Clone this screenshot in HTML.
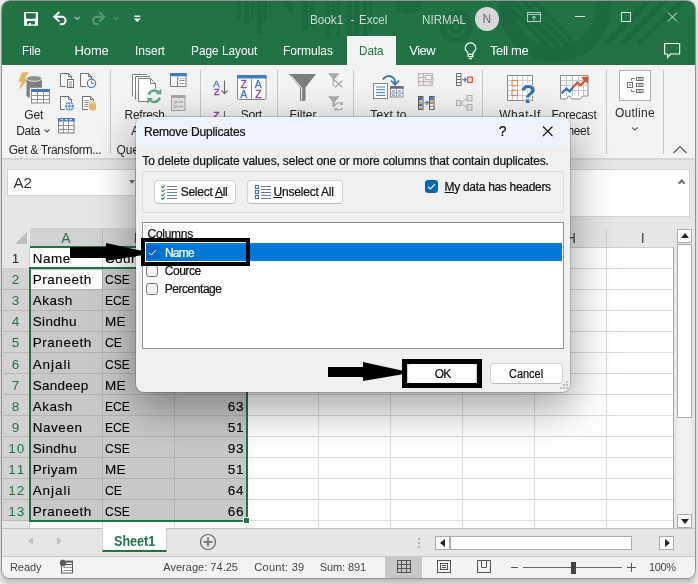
<!DOCTYPE html>
<html lang="en">
<head>
<meta charset="utf-8">
<title>Book1 - Excel</title>
<style>
*{box-sizing:border-box;margin:0;padding:0}
html,body{width:698px;height:584px;overflow:hidden}
body{background:#ededed;font-family:"Liberation Sans",sans-serif;font-size:12px;color:#222;position:relative}
.abs{position:absolute}
.t{position:absolute;white-space:nowrap;line-height:1}
#win{position:absolute;left:2px;top:1px;width:693px;height:577px;border-radius:8px;overflow:hidden;background:#e6e6e6;box-shadow:0 0 0 1px #939393,0 5px 5px 1px rgba(0,0,0,.2)}
/* all children of #win are positioned in page coordinates via this shim */
#pg{position:absolute;left:-2px;top:-1px;width:698px;height:584px;will-change:transform}
#title{left:0;top:0;width:698px;height:65px;background:#217346}
.tab{position:absolute;top:45px;font-size:13px;color:#fff;white-space:nowrap;line-height:1}
#ribbon{left:0;top:65px;width:698px;height:93px;background:#f3f3f3}
.rl{position:absolute;font-size:13px;color:#262626;white-space:nowrap;line-height:1}
.sep{position:absolute;width:1px;background:#c8c8c8;top:70px;height:84px}
#fbar{left:0;top:158px;width:698px;height:70px;background:#e6e6e6}
/* grid */
#grid{left:0;top:228px;width:674px;height:300px;background:#fff;overflow:hidden}
.ch{position:absolute;top:0;height:19px;background:#e6e6e6;font-size:14px;color:#444;text-align:center;line-height:19px}
.rh{position:absolute;left:0;width:30px;height:21px;background:#e6e6e6;font-size:14px;color:#262626;text-align:center;line-height:21px;border-bottom:1px solid #cfcfcf;padding-left:3px}
.rh.s{background:#d2d2d2;color:#217346;border-bottom-color:#b7b7b7}
.c{position:absolute;height:21px;font-size:14px;line-height:21px;color:#111;white-space:nowrap;overflow:hidden}
.n{text-align:right}
/* dialog */
#dlg{left:136px;top:117px;width:434px;height:275px;border-radius:8px;background:#f0f0f0;overflow:hidden;box-shadow:0 0 0 1px rgba(0,0,0,.16),0 14px 42px 3px rgba(0,0,0,.36)}
.btn{position:absolute;background:#fdfdfd;border:1px solid #d0d0d0;border-bottom-color:#bcbcbc;border-radius:4px;font-size:12px;color:#111;text-align:center}
.cb{position:absolute;width:12px;height:12px;border:1px solid #6f6f6f;border-radius:3px;background:#f6f6f6}
</style>
</head>
<body>
<div id="win"><div id="pg">

<!-- TITLE + TABS -->
<div id="title" class="abs">
<svg class="abs" style="left:0;top:0" width="698" height="65" viewBox="0 0 698 65">
<g fill="#1d6a40">
<rect x="237" y="0" width="4" height="19"/><rect x="244" y="0" width="5" height="24"/><rect x="251" y="0" width="3" height="20"/>
<rect x="257" y="0" width="5" height="34"/><rect x="263" y="0" width="4" height="21"/><rect x="269" y="0" width="2" height="17"/>
<polygon points="281,0 292,0 292,14"/>
<rect x="303" y="0" width="5" height="31"/><rect x="310" y="0" width="4" height="27"/>
<rect x="326" y="0" width="4" height="37"/><rect x="332" y="0" width="3" height="30"/><rect x="337" y="0" width="3" height="36"/>
<rect x="347" y="0" width="5" height="44"/><rect x="354" y="0" width="5" height="40"/><rect x="363" y="0" width="4" height="36"/><rect x="369" y="0" width="3" height="30"/>
</g>
<g fill="none" stroke="#1d6a40">
<circle cx="408.5" cy="0" r="14" fill="#1d6a40" stroke="none"/>
<circle cx="456" cy="27" r="5" stroke-width="3.5"/>
<circle cx="456" cy="27" r="13.5" stroke-width="6"/>
<circle cx="555" cy="6" r="48.5" stroke-width="15"/>
</g>
<g stroke="#1d6a40" stroke-width="5">
<line x1="498" y1="-4" x2="548" y2="46"/><line x1="508" y1="-4" x2="558" y2="46"/><line x1="518" y1="-4" x2="568" y2="46"/><line x1="528" y1="-4" x2="572" y2="40"/>
</g>
<g stroke="#1d6a40" stroke-width="5.5">
<line x1="653" y1="-4" x2="605" y2="44"/><line x1="669" y1="-4" x2="621" y2="44"/><line x1="687" y1="-4" x2="639" y2="44"/>
</g>
</svg>

<svg class="abs" style="left:0;top:0" width="160" height="36" viewBox="0 0 160 36" fill="none" stroke="#fff">
<path fill="#fff" stroke="none" fill-rule="evenodd" d="M24 12h14v13.8h-14zM26 13.3v4.4l1 1h7.8l1-1v-4.4zM27 21.1v3.5h2v-1.7h1.9v1.7h4v-3.5z"/>
<path d="M54.5 16.8h7.3a3.75 3.75 0 0 1 0 7.5h-2" stroke-width="2"/><path d="M59.3 12l-5 4.8 5 4.8" stroke-width="2"/>
<path d="M74.8 17l2.4 2.4 2.4-2.4" stroke="#a9c9b6" stroke-width="1.1"/>
<g stroke="#5b9977"><path d="M104 16.8h-7.3a3.75 3.75 0 0 0 0 7.5h2" stroke-width="2"/><path d="M99.2 12l5 4.8-5 4.8" stroke-width="2"/>
<path d="M113.7 17l2.4 2.4 2.4-2.4" stroke-width="1.1"/></g>
<path d="M134.3 16.2h6" stroke-width="1.4"/><path d="M133.8 18.6h7l-3.5 3.5z" fill="#fff" stroke="none"/>
</svg>
<svg class="abs" style="left:515px;top:5px" width="175" height="26" viewBox="0 0 175 26" fill="none" stroke="#dbe8e0" stroke-width="1">
<g stroke="#b4cfbf"><rect x="12.5" y="7.5" width="13" height="9"/><path d="M12.5 9.5h13"/><path d="M19 15.5v-4.5M17 13l2-2 2 2"/></g>
<path d="M60 11.5h10"/>
<rect x="106.5" y="7.5" width="9" height="9"/>
<path d="M153 7.5l9 9M162 7.5l-9 9"/>
</svg>
<svg class="abs" style="left:455px;top:36px" width="243" height="30" viewBox="455 36 243 30" fill="none" stroke="#fff" stroke-width="1.2">
<path d="M468.2 54.3c0-2.3-3-3.1-3-6.1a5.3 5.3 0 0 1 10.6 0c0 3-3 3.8-3 6.1z"/><path d="M468.2 56.6h4.6v-2.3M468.2 54.3v2.3M469 58.6h3"/>
<path d="M664.6 43.5h15v10.5h-9l-3 3.5v-3.5h-3z"/>
</svg>

<div class="t" style="left:310px;top:13px;font-size:13px;color:#c8ddd0;transform:scaleX(0.902);transform-origin:0 0;">Book1</div>
<div class="t" style="left:350.2px;top:13px;font-size:13px;color:#c8ddd0;">-</div>
<div class="t" style="left:359.3px;top:13px;font-size:13px;color:#c8ddd0;transform:scaleX(0.892);transform-origin:0 0;">Excel</div>
<div class="t" style="left:421.8px;top:13px;font-size:13px;color:#c8ddd0;transform:scaleX(0.895);transform-origin:0 0;">NIRMAL</div>
<div class="abs" style="left:475px;top:7px;width:24px;height:24px;border-radius:12px;background:#d9d9d9"></div>
<div class="t" style="left:482.6px;top:13px;font-size:12px;color:#6a6078;">N</div>
<div class="t" style="left:22px;top:44px;font-size:13px;color:#fff;transform:scaleX(0.9);transform-origin:0 0;">File</div>
<div class="t" style="left:74.6px;top:44px;font-size:13px;color:#fff;letter-spacing:-0.14px;">Home</div>
<div class="t" style="left:134.8px;top:44px;font-size:13px;color:#fff;transform:scaleX(0.921);transform-origin:0 0;">Insert</div>
<div class="t" style="left:190.6px;top:44px;font-size:13px;color:#fff;transform:scaleX(0.909);transform-origin:0 0;">Page Layout</div>
<div class="t" style="left:282.8px;top:44px;font-size:13px;color:#fff;transform:scaleX(0.922);transform-origin:0 0;">Formulas</div>
<div class="abs" style="left:347px;top:36px;width:49px;height:30px;background:#f3f3f3"></div>
<div class="t" style="left:358.9px;top:44px;font-size:13px;color:#217346;transform:scaleX(0.894);transform-origin:0 0;">Data</div>
<div class="t" style="left:409.2px;top:44px;font-size:13px;color:#fff;letter-spacing:-0.46px;">View</div>
<div class="t" style="left:490px;top:44px;font-size:13px;color:#fff;letter-spacing:-0.42px;">Tell me</div>
</div>

<!-- RIBBON -->
<div id="ribbon" class="abs"></div>
<div class="sep" style="left:110px"></div>
<div class="sep" style="left:200px"></div>
<div class="sep" style="left:277px"></div>
<div class="sep" style="left:353px"></div>
<div class="sep" style="left:482px"></div>
<div class="sep" style="left:606px"></div>
<div class="sep" style="left:663px"></div>
<div class="t" style="left:24.3px;top:109px;font-size:12px;color:#262626;letter-spacing:-0.15px;">Get</div>
<div class="t" style="left:16.3px;top:125px;font-size:12px;color:#262626;letter-spacing:-0.44px;">Data</div>
<div class="t" style="left:8.8px;top:144px;font-size:12px;color:#262626;letter-spacing:-0.31px;">Get &amp; Transform...</div>
<div class="t" style="left:124.6px;top:109px;font-size:12px;color:#262626;letter-spacing:-0.28px;">Refresh</div>
<div class="t" style="left:131.3px;top:125px;font-size:12px;color:#262626;">All</div>
<div class="t" style="left:116.6px;top:144px;font-size:12px;color:#262626;letter-spacing:-0.1px;">Queries</div>
<div class="t" style="left:213.1px;top:110px;font-size:9.5px;color:#8e44ad;">Z</div>
<div class="t" style="left:240.7px;top:109px;font-size:12px;color:#262626;letter-spacing:-0.19px;">Sort</div>
<div class="t" style="left:289.6px;top:109px;font-size:12px;color:#262626;letter-spacing:0.05px;">Filter</div>
<div class="t" style="left:370.3px;top:109px;font-size:12px;color:#262626;letter-spacing:0.15px;">Text to</div>
<div class="t" style="left:499.3px;top:109px;font-size:12px;color:#262626;letter-spacing:0.41px;">What-If</div>
<div class="t" style="left:551.6px;top:109px;font-size:12px;color:#262626;letter-spacing:-0.22px;">Forecast</div>
<div class="t" style="left:559.8px;top:125px;font-size:12px;color:#262626;letter-spacing:-0.35px;">Sheet</div>
<div class="t" style="left:614.9px;top:107px;font-size:12px;color:#262626;letter-spacing:0.28px;">Outline</div>
<svg class="abs" style="left:0;top:65px" width="698" height="93" viewBox="0 65 698 93">
<!-- Get Data -->
<polygon points="21.7,72.4 28.6,72 25,79.6 28,79.6 18.6,90.6 21.7,81.8 18.2,81.8" fill="#eab765"/>
<path d="M26.5 78.5v17a7.7 2.8 0 0 0 15.4 0v-17z" fill="#7d7d7d"/>
<ellipse cx="34.2" cy="78.5" rx="7.7" ry="2.8" fill="#8f8f8f" stroke="#e9e9e9" stroke-width="1"/>
<rect x="30.5" y="88.5" width="19.5" height="15" fill="#fff" stroke="#f3f3f3" stroke-width="1.4"/>
<rect x="31.5" y="89.5" width="18" height="13.5" fill="#fff" stroke="#858585" stroke-width="1"/>
<rect x="31" y="89" width="19" height="3" fill="#3d7cc9"/>
<path d="M37.5 92v11M43.5 92v11M31.5 95.5h18M31.5 99.5h18" stroke="#8f8f8f" stroke-width="1" fill="none"/>
<!-- doc + list -->
<g fill="none" stroke="#6f6f6f" stroke-width="1">
<path d="M65.5 86.5h-5v-13h8l3 3v2" fill="#fff"/><path d="M68.5 73.5v3h3"/>
<rect x="67.5" y="79.5" width="6" height="8" fill="#fff"/><path d="M69 82h3M69 84h3M69 86h3" stroke-width=".800"/>
<!-- doc + clock -->
<path d="M86 86.5h-5.5v-13h8l3 3v2.5" fill="#fff"/><path d="M88.5 73.5v3h3"/>
<circle cx="91.5" cy="83.3" r="4.2" fill="#fff" stroke="#3d7cc9" stroke-width="1.2"/><path d="M91.5 80.8v2.8h2.3" stroke="#3d7cc9"/>
<!-- doc + globe -->
<path d="M65 109.5h-4.5v-13h8l3 3v2.5" fill="#fff"/><path d="M68.5 96.5v3h3"/>
<circle cx="69.5" cy="106.3" r="4.4" fill="#3d7cc9" stroke="none"/>
<path d="M65.5 104.8h8M65.5 107.8h8" stroke="#fff" stroke-width=".900"/><ellipse cx="69.5" cy="106.3" rx="1.8" ry="4" stroke="#fff" stroke-width=".900"/>
<!-- doc + lines + cylinder -->
<path d="M88 109.5h-5.5v-13h8l3 3v2" fill="#fff"/><path d="M90.5 96.5v3h3"/>
<path d="M84.5 100.5h4M84.5 102.5h4M84.5 104.5h4M84.5 106.5h4" stroke-width=".800"/>
<path d="M89 102.5v6.5a3.5 1.5 0 0 0 7 0v-6.5z" fill="#eab765" stroke="none"/><ellipse cx="92.5" cy="102.5" rx="3.5" ry="1.5" fill="#f1cd90" stroke="none"/>
</g>
<!-- table small -->
<rect x="58.5" y="118.5" width="15.5" height="14.5" fill="#fff" stroke="#7b7b7b"/>
<rect x="58" y="118" width="16.5" height="3.5" fill="#3d7cc9"/>
<path d="M60.5 119.7h2.5M65 119.7h2.5M69.5 119.7h2.5" stroke="#fff" stroke-width="1"/>
<path d="M63.5 121.5v11.5M68.5 121.5v11.5M58.5 125.5h15.5M58.5 129.5h15.5" stroke="#8f8f8f" fill="none"/>
<!-- chevron after Data -->
<path d="M44.5 129.5l2.5 2.5 2.5-2.5" fill="none" stroke="#555" stroke-width="1.1"/>

<!-- Refresh All -->
<g fill="#fff" stroke="#7d7d7d" stroke-width="1">
<path d="M132.5 96.5v-22h14.5"/><path d="M135.5 99.5v-23h14.5" fill="none"/>
<path d="M138.5 78.5h12l5 5v18h-17z"/><path d="M150.5 78.5v5h5" fill="none"/>
</g>
<circle cx="154.3" cy="96.2" r="7.8" fill="#f3f3f3"/>
<g fill="none" stroke="#5fa888" stroke-width="2.5">
<path d="M148.8 94.8a5.7 5.7 0 0 1 9.8-2.4"/><path d="M159.8 97.6a5.7 5.7 0 0 1-9.8 2.4"/>
</g>
<path d="M161.3 88.7v5.6h-5.6z" fill="#5fa888"/><path d="M147.3 103.7v-5.6h5.6z" fill="#5fa888"/>
<!-- queries & connections -->
<rect x="170.5" y="73.5" width="15.5" height="13" fill="#fff" stroke="#7d7d7d"/>
<rect x="170" y="73" width="16.5" height="3.3" fill="#3d7cc9"/>
<path d="M177.5 76.5v10" stroke="#7d7d7d"/><path d="M179.5 80.5h5M179.5 83.5h5" stroke="#8f8f8f"/><path d="M177 78.5h1.5M180 78.5h1.5M183 78.5h1.5" stroke="#8f8f8f" stroke-width=".800"/>
<!-- properties (disabled) -->
<rect x="171.5" y="95.5" width="13.5" height="15" fill="#e9e4e9" stroke="#a9a9a9"/>
<rect x="171" y="95" width="14.5" height="3" fill="#a9a9a9"/>
<circle cx="175.5" cy="102" r="1.2" fill="none" stroke="#9a9a9a" stroke-width=".800"/><circle cx="175.5" cy="106.5" r="1.2" fill="none" stroke="#9a9a9a" stroke-width=".800"/>
<path d="M178.5 102h4.5M178.5 106.5h4.5" stroke="#9a9a9a"/>

<!-- sort A-Z -->
<text x="213.3" y="87.3" font-family="Liberation Sans, sans-serif" font-size="9.5" stroke-width=".35" fill="#3d7cc9" stroke="#3d7cc9">A</text>
<text x="213.7" y="94.8" font-family="Liberation Sans, sans-serif" font-size="9.5" stroke-width=".35" fill="#8e44ad" stroke="#8e44ad">Z</text>
<path d="M224.5 80.5v13M221.5 90.5l3 3.2 3-3.2" fill="none" stroke="#6a6a6a" stroke-width="1.1"/>
<text x="213.7" y="117.8" font-family="Liberation Sans, sans-serif" font-size="9.5" stroke-width=".35" fill="#8e44ad" stroke="#8e44ad">Z</text>
<path d="M224.5 111v13" fill="none" stroke="#6a6a6a" stroke-width="1.1"/>
<!-- Sort big -->
<rect x="237.5" y="75.5" width="28.5" height="24" rx="1" fill="#fff" stroke="#8a8a8a"/>
<rect x="237" y="75" width="29.5" height="3.5" fill="#3d7cc9"/>
<path d="M251.5 78.5v21" stroke="#8a8a8a"/>
<g font-family="Liberation Sans, sans-serif" font-size="10.5" stroke-width=".35">
<text x="240.6" y="88" fill="#8e44ad" stroke="#8e44ad">Z</text><text x="240.3" y="97.5" fill="#3d7cc9" stroke="#3d7cc9">A</text>
<text x="254.8" y="88" fill="#3d7cc9" stroke="#3d7cc9">A</text><text x="255.2" y="97.5" fill="#8e44ad" stroke="#8e44ad">Z</text>
</g>
<!-- Filter funnel -->
<path d="M289 74h27l-10.5 13.5v13.3h-5.5v-13.3z" fill="#7d7d7d"/>
<path d="M291.5 76l10.2 12v12" fill="none" stroke="#fff" stroke-width="1"/>
<!-- clear filter (disabled) -->
<path d="M328 73.3h11.5l-4.5 5.5v3h-2.5v-3z" fill="#a9a9a9"/>
<path d="M333 82v3.5h2" fill="none" stroke="#a9a9a9"/>
<path d="M335 80.5l7.5 7M342.5 80.5l-7.5 7" stroke="#a9a9a9" stroke-width="1.2"/>
<!-- reapply (disabled) -->
<path d="M328 96.3h11.5l-4.5 5.5v5h-2.5v-5z" fill="#a9a9a9"/>
<g fill="none" stroke="#a9a9a9" stroke-width="1.2"><path d="M335.3 105.3a3.6 3.6 0 0 1 6.3-1.2"/><path d="M342.3 107.5a3.6 3.6 0 0 1-6.3 1.2"/></g>
<path d="M342.8 101.5v3.3h-3.3z" fill="#a9a9a9"/><path d="M334.7 111.3v-3.3h3.3z" fill="#a9a9a9"/>

<!-- Text to columns -->
<rect x="373.5" y="83.5" width="14" height="15" fill="#fff" stroke="#8a8a8a"/>
<path d="M376 87h9M376 89.8h9M376 92.6h9M376 95.4h9" stroke="#3d7cc9" stroke-width="1"/>
<rect x="390.5" y="86.5" width="12.5" height="10.5" fill="#fff" stroke="#8a8a8a"/>
<rect x="390" y="86" width="13.5" height="2.8" fill="#6f6f6f"/>
<path d="M396.5 89v8M390.5 93h12.5" stroke="#9a9a9a"/><path d="M392 91h3M398 91h3M392 95h3M398 95h3" stroke="#3d7cc9"/>
<path d="M383 79.5a6.5 6.5 0 0 1 12 1.5v2" fill="none" stroke="#2f74b9" stroke-width="1.8"/>
<path d="M391 80.5l4 4.3 4-4.3" fill="none" stroke="#2f74b9" stroke-width="1.8"/>
<!-- flash fill (disabled) -->
<g fill="none" stroke="#bdb6bd"><rect x="418.5" y="73.5" width="14" height="12" fill="#ece8ec"/><path d="M418.5 77.5h14M418.5 81.5h14M423.5 73.5v12"/><rect x="425.5" y="75.5" width="6" height="4" fill="#f3f3f3"/></g>
<polygon points="431,78 434.5,78 432.5,82 434.5,82 429.5,88 431,83.5 429,83.5" fill="#c9c9c9"/>
<!-- remove duplicates -->
<g stroke="#5f5f5f" stroke-width="1">
<rect x="418.5" y="96.5" width="4.5" height="13" fill="#fff"/><rect x="429.5" y="96.5" width="4.5" height="13" fill="#fff"/></g>
<rect x="419" y="97" width="3.5" height="3" fill="#3d7cc9"/><rect x="419" y="100.3" width="3.5" height="3" fill="#e6b35f"/><rect x="419" y="103.5" width="3.5" height="2.8" fill="#3d7cc9"/><rect x="419" y="106.5" width="3.5" height="2.5" fill="#e6b35f"/>
<rect x="430" y="97" width="3.5" height="3" fill="#3d7cc9"/><rect x="430" y="100.3" width="3.5" height="3" fill="#e6b35f"/>
<path d="M430 103.3h3.5M430 106.3h3.5" stroke="#5f5f5f" stroke-width=".800"/>
<path d="M424 102.8h4M426.3 100.8l2 2-2 2" fill="none" stroke="#2f74b9" stroke-width="1.1"/>
<!-- data validation -->
<rect x="456.5" y="73.5" width="4.5" height="12" fill="#fff" stroke="#6f6f6f"/><path d="M456.5 76.5h4.5M456.5 79.5h4.5M456.5 82.5h4.5" stroke="#6f6f6f"/>
<path d="M462 79.7h4M464.3 77.7l2 2-2 2" fill="none" stroke="#2f74b9" stroke-width="1.1"/>
<rect x="467.7" y="77.2" width="4.6" height="5" fill="#fff" stroke="#d9472b" stroke-width="1.2"/><rect x="469.5" y="79.2" width="1" height="1" fill="#d9472b"/>
<!-- relationships (disabled) -->
<g fill="#ece8ec" stroke="#b5afb5"><path d="M461 102.8l6-4.5M461 102.8l6 5" fill="none"/><rect x="456.5" y="100.5" width="4.5" height="5"/><rect x="467" y="95.5" width="5" height="5.5"/><rect x="467" y="104.5" width="5" height="5.5"/><path d="M458 103h1.5M468.7 98.3h1.5M468.7 107.3h1.5" stroke-width=".800"/></g>

<!-- What-If -->
<rect x="507.5" y="75.5" width="25" height="25" fill="#fff" stroke="#8a8a8a"/>
<path d="M512.5 76v24M517.5 76v24M522.5 76v24M527.5 76v24M508 80.5h24M508 85.5h24M508 90.5h24M508 95.5h24" stroke="#cfcfcf" fill="none"/>
<rect x="512" y="80.5" width="5.5" height="5.3" fill="#fff" stroke="#e8873e" stroke-width="1.1"/><rect x="512" y="90.2" width="5.5" height="5.3" fill="#fff" stroke="#e8873e" stroke-width="1.1"/>
<text x="520.3" y="103.3" font-family="Liberation Sans, sans-serif" font-size="26" font-weight="bold" fill="#f3f3f3" stroke="#f3f3f3" stroke-width="2.5">?</text>
<text x="520.3" y="103.3" font-family="Liberation Sans, sans-serif" font-size="26" font-weight="bold" fill="#2f74b9">?</text>
<!-- Forecast -->
<path d="M560.5 75.5h27.5v20.5h-5.5l-2 3h-9l-1.5-3h-1.5l-2 3h-6z" fill="#fff" stroke="#8a8a8a"/>
<path d="M566.5 76v20M572.5 76v20M578.5 76v20M583.5 76v20M561 80.5h27M561 85.5h27M561 90.5h27" stroke="#c4c4c4" fill="none"/>
<path d="M561.7 93.5l4.8-5 3 3 3.8-4.5" fill="none" stroke="#2f74b9" stroke-width="2.2"/>
<path d="M573 87.2l4.5-4.7 3 3 5-5.5" fill="none" stroke="#d9542e" stroke-width="2.2"/>
<path d="M581 77.2l7.5-.7-.7 7.5z" fill="#d9542e"/>

<!-- Outline -->
<rect x="619.5" y="70.5" width="31" height="30" fill="#fff" stroke="#ababab"/>
<g fill="none" stroke="#6f6f6f" stroke-width="1">
<rect x="627.5" y="82.5" width="5" height="5" fill="#fff"/><path d="M629 85h2M630 84v2" stroke-width=".800"/>
<path d="M631.5 80.5v-2h3M631.5 89.5v2h3"/>
<rect x="636.5" y="77.5" width="6.5" height="3"/><rect x="636.5" y="83.5" width="6.5" height="3"/><rect x="636.5" y="89.5" width="6.5" height="3"/>
</g>
<path d="M638 79h3.5M638 85h3.5M638 91h3.5" stroke="#3d7cc9"/>
<path d="M632 127.5l2.8 2.6 2.8-2.6" fill="none" stroke="#555" stroke-width="1.1"/>
<!-- collapse ribbon -->
<path d="M673.5 153l6.5-6.5 6.5 6.5" fill="none" stroke="#555" stroke-width="1.2"/>
</svg>


<!-- FORMULA BAR -->
<div id="fbar" class="abs">
<div class="abs" style="left:0;top:0;width:698px;height:2px;background:#d6d6d6"></div>
<div class="abs" style="left:7px;top:11px;width:129px;height:27px;background:#fff;border:1px solid #d4d4d4"></div>
<div class="t" style="left:13.6px;top:17px;font-size:15px;color:#333;">A2</div>
<div class="abs" style="left:129px;top:22px;width:0;height:0;border-left:3px solid transparent;border-right:3px solid transparent;border-top:4px solid #777"></div>
<div class="abs" style="left:200px;top:11px;width:490px;height:48px;background:#fff;border:1px solid #d4d4d4"></div>
<svg class="abs" style="left:676px;top:19px" width="12" height="10" viewBox="0 0 12 10" fill="none" stroke="#666" stroke-width="1.9"><path d="M2.7 6.7l3-3.2 3 3.2"/></svg>
</div>

<!-- GRID -->
<div id="grid" class="abs">
<div class="abs" style="left:30px;top:41px;width:217px;height:252px;background:#c8c8c8"></div>
<div class="abs" style="left:31px;top:42px;width:71px;height:20px;background:#fff"></div>
<div class="abs" style="left:0;top:0;width:674px;height:20px;background:#e6e6e6"></div>
<div class="abs" style="left:30px;top:0;width:73px;height:19px;background:#d2d2d2"></div>
<div class="abs" style="left:102px;top:1px;width:1px;height:18px;background:#b9b9b9"></div>
<div class="t" style="left:61.2px;top:3px;font-size:14px;color:#217346;">A</div>
<div class="abs" style="left:103px;top:0;width:72px;height:19px;background:#d2d2d2"></div>
<div class="abs" style="left:174px;top:1px;width:1px;height:18px;background:#b9b9b9"></div>
<div class="t" style="left:133.7px;top:3px;font-size:14px;color:#217346;">B</div>
<div class="abs" style="left:175px;top:0;width:72px;height:19px;background:#d2d2d2"></div>
<div class="abs" style="left:246px;top:1px;width:1px;height:18px;background:#b9b9b9"></div>
<div class="t" style="left:205.7px;top:3px;font-size:14px;color:#217346;">C</div>
<div class="abs" style="left:318px;top:1px;width:1px;height:18px;background:#cdcdcd"></div>
<div class="t" style="left:277.7px;top:3px;font-size:14px;color:#444;">D</div>
<div class="abs" style="left:390px;top:1px;width:1px;height:18px;background:#cdcdcd"></div>
<div class="t" style="left:349.7px;top:3px;font-size:14px;color:#444;">E</div>
<div class="abs" style="left:462px;top:1px;width:1px;height:18px;background:#cdcdcd"></div>
<div class="t" style="left:421.7px;top:3px;font-size:14px;color:#444;">F</div>
<div class="abs" style="left:534px;top:1px;width:1px;height:18px;background:#cdcdcd"></div>
<div class="t" style="left:493.7px;top:3px;font-size:14px;color:#444;">G</div>
<div class="abs" style="left:606px;top:1px;width:1px;height:18px;background:#cdcdcd"></div>
<div class="t" style="left:565.7px;top:3px;font-size:14px;color:#444;">H</div>
<div class="abs" style="left:678px;top:1px;width:1px;height:18px;background:#cdcdcd"></div>
<div class="t" style="left:640.7px;top:3px;font-size:14px;color:#444;">I</div>
<div class="abs" style="left:30px;top:19px;width:644px;height:1px;background:#cdcdcd"></div>
<div class="abs" style="left:30px;top:18px;width:217px;height:2px;background:#217346"></div>
<div class="abs" style="left:15px;top:4px;width:0;height:0;border-left:12px solid transparent;border-bottom:12px solid #bdbdbd"></div>
<div class="abs" style="left:30px;top:40px;width:644px;height:1px;background:#d9d9d9"></div>
<div class="abs" style="left:30px;top:61px;width:644px;height:1px;background:#d9d9d9"></div>
<div class="abs" style="left:30px;top:82px;width:644px;height:1px;background:#d9d9d9"></div>
<div class="abs" style="left:30px;top:103px;width:644px;height:1px;background:#d9d9d9"></div>
<div class="abs" style="left:30px;top:124px;width:644px;height:1px;background:#d9d9d9"></div>
<div class="abs" style="left:30px;top:145px;width:644px;height:1px;background:#d9d9d9"></div>
<div class="abs" style="left:30px;top:166px;width:644px;height:1px;background:#d9d9d9"></div>
<div class="abs" style="left:30px;top:187px;width:644px;height:1px;background:#d9d9d9"></div>
<div class="abs" style="left:30px;top:208px;width:644px;height:1px;background:#d9d9d9"></div>
<div class="abs" style="left:30px;top:229px;width:644px;height:1px;background:#d9d9d9"></div>
<div class="abs" style="left:30px;top:250px;width:644px;height:1px;background:#d9d9d9"></div>
<div class="abs" style="left:30px;top:271px;width:644px;height:1px;background:#d9d9d9"></div>
<div class="abs" style="left:30px;top:292px;width:644px;height:1px;background:#d9d9d9"></div>
<div class="abs" style="left:30px;top:313px;width:644px;height:1px;background:#d9d9d9"></div>
<div class="abs" style="left:102px;top:20px;width:1px;height:280px;background:#d9d9d9"></div>
<div class="abs" style="left:174px;top:20px;width:1px;height:280px;background:#d9d9d9"></div>
<div class="abs" style="left:246px;top:20px;width:1px;height:280px;background:#d9d9d9"></div>
<div class="abs" style="left:318px;top:20px;width:1px;height:280px;background:#d9d9d9"></div>
<div class="abs" style="left:390px;top:20px;width:1px;height:280px;background:#d9d9d9"></div>
<div class="abs" style="left:462px;top:20px;width:1px;height:280px;background:#d9d9d9"></div>
<div class="abs" style="left:534px;top:20px;width:1px;height:280px;background:#d9d9d9"></div>
<div class="abs" style="left:606px;top:20px;width:1px;height:280px;background:#d9d9d9"></div>
<div class="abs" style="left:30px;top:61px;width:217px;height:1px;background:#b2b2b2"></div>
<div class="abs" style="left:30px;top:82px;width:217px;height:1px;background:#b2b2b2"></div>
<div class="abs" style="left:30px;top:103px;width:217px;height:1px;background:#b2b2b2"></div>
<div class="abs" style="left:30px;top:124px;width:217px;height:1px;background:#b2b2b2"></div>
<div class="abs" style="left:30px;top:145px;width:217px;height:1px;background:#b2b2b2"></div>
<div class="abs" style="left:30px;top:166px;width:217px;height:1px;background:#b2b2b2"></div>
<div class="abs" style="left:30px;top:187px;width:217px;height:1px;background:#b2b2b2"></div>
<div class="abs" style="left:30px;top:208px;width:217px;height:1px;background:#b2b2b2"></div>
<div class="abs" style="left:30px;top:229px;width:217px;height:1px;background:#b2b2b2"></div>
<div class="abs" style="left:30px;top:250px;width:217px;height:1px;background:#b2b2b2"></div>
<div class="abs" style="left:30px;top:271px;width:217px;height:1px;background:#b2b2b2"></div>
<div class="abs" style="left:102px;top:41px;width:1px;height:252px;background:#b2b2b2"></div>
<div class="abs" style="left:174px;top:41px;width:1px;height:252px;background:#b2b2b2"></div>
<div class="abs" style="left:0;top:20px;width:30px;height:280px;background:#e6e6e6"></div>
<div class="abs" style="left:0;top:41px;width:30px;height:252px;background:#d2d2d2"></div>
<div class="abs" style="left:3px;top:40px;width:27px;height:1px;background:#cdcdcd"></div>
<div class="t" style="left:11.7px;top:24px;font-size:13.5px;color:#262626;">1</div>
<div class="abs" style="left:3px;top:61px;width:27px;height:1px;background:#b9b9b9"></div>
<div class="t" style="left:11.7px;top:45px;font-size:13.5px;color:#217346;">2</div>
<div class="abs" style="left:3px;top:82px;width:27px;height:1px;background:#b9b9b9"></div>
<div class="t" style="left:11.7px;top:66px;font-size:13.5px;color:#217346;">3</div>
<div class="abs" style="left:3px;top:103px;width:27px;height:1px;background:#b9b9b9"></div>
<div class="t" style="left:11.7px;top:87px;font-size:13.5px;color:#217346;">4</div>
<div class="abs" style="left:3px;top:124px;width:27px;height:1px;background:#b9b9b9"></div>
<div class="t" style="left:11.7px;top:108px;font-size:13.5px;color:#217346;">5</div>
<div class="abs" style="left:3px;top:145px;width:27px;height:1px;background:#b9b9b9"></div>
<div class="t" style="left:11.7px;top:130px;font-size:13.5px;color:#217346;">6</div>
<div class="abs" style="left:3px;top:166px;width:27px;height:1px;background:#b9b9b9"></div>
<div class="t" style="left:11.7px;top:151px;font-size:13.5px;color:#217346;">7</div>
<div class="abs" style="left:3px;top:187px;width:27px;height:1px;background:#b9b9b9"></div>
<div class="t" style="left:11.7px;top:172px;font-size:13.5px;color:#217346;">8</div>
<div class="abs" style="left:3px;top:208px;width:27px;height:1px;background:#b9b9b9"></div>
<div class="t" style="left:11.7px;top:193px;font-size:13.5px;color:#217346;">9</div>
<div class="abs" style="left:3px;top:229px;width:27px;height:1px;background:#b9b9b9"></div>
<div class="t" style="left:8.2px;top:214px;font-size:13.5px;color:#217346;letter-spacing:0.99px;">10</div>
<div class="abs" style="left:3px;top:250px;width:27px;height:1px;background:#b9b9b9"></div>
<div class="t" style="left:8.2px;top:235px;font-size:13.5px;color:#217346;letter-spacing:2px;">11</div>
<div class="abs" style="left:3px;top:271px;width:27px;height:1px;background:#b9b9b9"></div>
<div class="t" style="left:8.2px;top:256px;font-size:13.5px;color:#217346;letter-spacing:0.99px;">12</div>
<div class="abs" style="left:3px;top:292px;width:27px;height:1px;background:#b9b9b9"></div>
<div class="t" style="left:8.2px;top:277px;font-size:13.5px;color:#217346;letter-spacing:0.99px;">13</div>
<div class="abs" style="left:3px;top:313px;width:27px;height:1px;background:#cdcdcd"></div>
<div class="t" style="left:8.2px;top:298px;font-size:13.5px;color:#262626;letter-spacing:0.99px;">14</div>
<div class="abs" style="left:29px;top:20px;width:1px;height:280px;background:#cdcdcd"></div>
<div class="abs" style="left:29px;top:41px;width:2px;height:252px;background:#217346"></div>
<div class="t" style="left:32.7px;top:24px;font-size:13.5px;color:#000;letter-spacing:0.53px;-webkit-text-stroke:.12px #000;">Name</div>
<div class="t" style="left:104.9px;top:24px;font-size:13.5px;color:#000;letter-spacing:0.42px;-webkit-text-stroke:.12px #000;">Cource</div>
<div class="t" style="left:177.2px;top:24px;font-size:13.5px;color:#000;letter-spacing:-0.16px;-webkit-text-stroke:.12px #000;">Percentage</div>
<div class="t" style="left:32.7px;top:45px;font-size:13.5px;color:#000;letter-spacing:0.55px;-webkit-text-stroke:.12px #000;">Praneeth</div>
<div class="t" style="left:105px;top:45px;font-size:13.5px;color:#000;transform:scaleX(0.887);transform-origin:0 0;-webkit-text-stroke:.12px #000;">CSE</div>
<div class="t" style="left:227.8px;top:45px;font-size:13.5px;color:#000;letter-spacing:0.79px;-webkit-text-stroke:.12px #000;">85</div>
<div class="t" style="left:32.7px;top:66px;font-size:13.5px;color:#000;letter-spacing:0.52px;-webkit-text-stroke:.12px #000;">Akash</div>
<div class="t" style="left:105px;top:66px;font-size:13.5px;color:#000;transform:scaleX(0.894);transform-origin:0 0;-webkit-text-stroke:.12px #000;">ECE</div>
<div class="t" style="left:227.8px;top:66px;font-size:13.5px;color:#000;letter-spacing:0.79px;-webkit-text-stroke:.12px #000;">92</div>
<div class="t" style="left:32.7px;top:87px;font-size:13.5px;color:#000;letter-spacing:0.35px;-webkit-text-stroke:.12px #000;">Sindhu</div>
<div class="t" style="left:104.9px;top:87px;font-size:13.5px;color:#000;letter-spacing:0.47px;-webkit-text-stroke:.12px #000;">ME</div>
<div class="t" style="left:227.8px;top:87px;font-size:13.5px;color:#000;letter-spacing:0.79px;-webkit-text-stroke:.12px #000;">78</div>
<div class="t" style="left:32.7px;top:108px;font-size:13.5px;color:#000;letter-spacing:0.55px;-webkit-text-stroke:.12px #000;">Praneeth</div>
<div class="t" style="left:105px;top:108px;font-size:13.5px;color:#000;transform:scaleX(0.907);transform-origin:0 0;-webkit-text-stroke:.12px #000;">CE</div>
<div class="t" style="left:227.8px;top:108px;font-size:13.5px;color:#000;letter-spacing:0.79px;-webkit-text-stroke:.12px #000;">85</div>
<div class="t" style="left:32.7px;top:130px;font-size:13.5px;color:#000;letter-spacing:0.92px;-webkit-text-stroke:.12px #000;">Anjali</div>
<div class="t" style="left:105px;top:130px;font-size:13.5px;color:#000;transform:scaleX(0.887);transform-origin:0 0;-webkit-text-stroke:.12px #000;">CSE</div>
<div class="t" style="left:227.8px;top:130px;font-size:13.5px;color:#000;letter-spacing:0.79px;-webkit-text-stroke:.12px #000;">88</div>
<div class="t" style="left:32.7px;top:151px;font-size:13.5px;color:#000;letter-spacing:0.26px;-webkit-text-stroke:.12px #000;">Sandeep</div>
<div class="t" style="left:104.9px;top:151px;font-size:13.5px;color:#000;letter-spacing:0.47px;-webkit-text-stroke:.12px #000;">ME</div>
<div class="t" style="left:227.8px;top:151px;font-size:13.5px;color:#000;letter-spacing:0.79px;-webkit-text-stroke:.12px #000;">75</div>
<div class="t" style="left:32.7px;top:172px;font-size:13.5px;color:#000;letter-spacing:0.52px;-webkit-text-stroke:.12px #000;">Akash</div>
<div class="t" style="left:105px;top:172px;font-size:13.5px;color:#000;transform:scaleX(0.894);transform-origin:0 0;-webkit-text-stroke:.12px #000;">ECE</div>
<div class="t" style="left:227.8px;top:172px;font-size:13.5px;color:#000;letter-spacing:0.79px;-webkit-text-stroke:.12px #000;">63</div>
<div class="t" style="left:32.7px;top:193px;font-size:13.5px;color:#000;letter-spacing:0.55px;-webkit-text-stroke:.12px #000;">Naveen</div>
<div class="t" style="left:105px;top:193px;font-size:13.5px;color:#000;transform:scaleX(0.894);transform-origin:0 0;-webkit-text-stroke:.12px #000;">ECE</div>
<div class="t" style="left:227.8px;top:193px;font-size:13.5px;color:#000;letter-spacing:0.79px;-webkit-text-stroke:.12px #000;">51</div>
<div class="t" style="left:32.7px;top:214px;font-size:13.5px;color:#000;letter-spacing:0.35px;-webkit-text-stroke:.12px #000;">Sindhu</div>
<div class="t" style="left:105px;top:214px;font-size:13.5px;color:#000;transform:scaleX(0.887);transform-origin:0 0;-webkit-text-stroke:.12px #000;">CSE</div>
<div class="t" style="left:227.8px;top:214px;font-size:13.5px;color:#000;letter-spacing:0.79px;-webkit-text-stroke:.12px #000;">93</div>
<div class="t" style="left:32.7px;top:235px;font-size:13.5px;color:#000;letter-spacing:0.5px;-webkit-text-stroke:.12px #000;">Priyam</div>
<div class="t" style="left:104.9px;top:235px;font-size:13.5px;color:#000;letter-spacing:0.47px;-webkit-text-stroke:.12px #000;">ME</div>
<div class="t" style="left:227.8px;top:235px;font-size:13.5px;color:#000;letter-spacing:0.79px;-webkit-text-stroke:.12px #000;">51</div>
<div class="t" style="left:32.7px;top:256px;font-size:13.5px;color:#000;letter-spacing:0.92px;-webkit-text-stroke:.12px #000;">Anjali</div>
<div class="t" style="left:105px;top:256px;font-size:13.5px;color:#000;transform:scaleX(0.907);transform-origin:0 0;-webkit-text-stroke:.12px #000;">CE</div>
<div class="t" style="left:227.8px;top:256px;font-size:13.5px;color:#000;letter-spacing:0.79px;-webkit-text-stroke:.12px #000;">64</div>
<div class="t" style="left:32.7px;top:277px;font-size:13.5px;color:#000;letter-spacing:0.55px;-webkit-text-stroke:.12px #000;">Praneeth</div>
<div class="t" style="left:105px;top:277px;font-size:13.5px;color:#000;transform:scaleX(0.887);transform-origin:0 0;-webkit-text-stroke:.12px #000;">CSE</div>
<div class="t" style="left:227.8px;top:277px;font-size:13.5px;color:#000;letter-spacing:0.79px;-webkit-text-stroke:.12px #000;">66</div>
<div class="abs" style="left:29px;top:39px;width:219px;height:255px;border:2px solid #217346"></div>
<div class="abs" style="left:243px;top:289px;width:7px;height:7px;background:#217346;border:1px solid #fff"></div>
</div>
<div class="abs" style="left:674px;top:228px;width:24px;height:300px;background:#e6e6e6"></div>
<div class="abs" style="left:673px;top:247px;width:1px;height:281px;background:#ababab"></div>
<div class="abs" style="left:677px;top:244px;width:15px;height:270px;background:#f0f0f0"></div>
<div class="abs" style="left:677px;top:229px;width:15px;height:14px;background:#fff;border:1px solid #ababab"></div>
<div class="abs" style="left:681px;top:233px;width:0;height:0;border-left:4px solid transparent;border-right:4px solid transparent;border-bottom:5px solid #222"></div>
<div class="abs" style="left:677px;top:244px;width:15px;height:174px;background:#fff;border:1px solid #ababab"></div>
<div class="abs" style="left:677px;top:514px;width:15px;height:14px;background:#fff;border:1px solid #ababab"></div>
<div class="abs" style="left:681px;top:519px;width:0;height:0;border-left:4px solid transparent;border-right:4px solid transparent;border-top:5px solid #222"></div>

<!-- SHEET TABS / STATUS -->
<div id="sheetbar" class="abs" style="left:0;top:528px;width:698px;height:28px;background:#e6e6e6">
<div class="abs" style="left:0;top:0;width:698px;height:1px;background:#bdbdbd"></div>
<div class="abs" style="left:102px;top:0;width:65px;height:24px;background:#fff;border-bottom:2px solid #217346;border-left:1px solid #cfcfcf;border-right:1px solid #cfcfcf"></div>
<div class="t" style="left:113.5px;top:6px;font-size:14px;color:#217346;font-weight:bold;transform:scaleX(0.897);transform-origin:0 0;">Sheet1</div>
<div class="abs" style="left:28px;top:9px;width:0;height:0;border-top:4px solid transparent;border-bottom:4px solid transparent;border-right:5px solid #c0c0c0"></div>
<div class="abs" style="left:57px;top:9px;width:0;height:0;border-top:4px solid transparent;border-bottom:4px solid transparent;border-left:5px solid #c0c0c0"></div>
<svg class="abs" style="left:198px;top:4px" width="20" height="20" viewBox="0 0 20 20" fill="none" stroke="#666" stroke-width="1.2"><circle cx="10" cy="10" r="7.5"/><path d="M10 5.5v9M5.5 10h9" stroke-width="1.5"/></svg>
<div class="abs" style="left:418px;top:10px;width:2px;height:2px;background:#b0b0b0"></div>
<div class="abs" style="left:418px;top:14px;width:2px;height:2px;background:#b0b0b0"></div>
<div class="abs" style="left:418px;top:18px;width:2px;height:2px;background:#b0b0b0"></div>
<div class="abs" style="left:435px;top:8px;width:15px;height:14px;background:#fff;border:1px solid #ababab"></div>
<div class="abs" style="left:440px;top:11px;width:0;height:0;border-top:4px solid transparent;border-bottom:4px solid transparent;border-right:5px solid #222"></div>
<div class="abs" style="left:450px;top:8px;width:182px;height:14px;background:#fff;border:1px solid #ababab"></div>
<div class="abs" style="left:659px;top:8px;width:15px;height:14px;background:#fff;border:1px solid #ababab"></div>
<div class="abs" style="left:665px;top:11px;width:0;height:0;border-top:4px solid transparent;border-bottom:4px solid transparent;border-left:5px solid #222"></div>
</div>
<div id="status" class="abs" style="left:0;top:556px;width:698px;height:23px;background:#f3f3f3">
<div class="abs" style="left:0;top:0;width:698px;height:1px;background:#c6c6c6"></div>
<div class="t" style="left:10px;top:6px;font-size:11px;color:#444;letter-spacing:-0.09px;">Ready</div>
<div class="t" style="left:163.3px;top:6px;font-size:11px;color:#444;letter-spacing:0.02px;">Average: 74.25</div>
<div class="t" style="left:254.3px;top:6px;font-size:11px;color:#444;letter-spacing:0.28px;">Count: 39</div>
<div class="t" style="left:319.8px;top:6px;font-size:11px;color:#444;letter-spacing:-0.12px;">Sum: 891</div>
<div class="t" style="left:649.1px;top:6px;font-size:11px;color:#444;letter-spacing:-0.41px;">100%</div>
<div class="abs" style="left:385px;top:1px;width:37px;height:21px;background:#c8c8c8"></div>
<svg class="abs" style="left:55px;top:2px" width="22" height="18" viewBox="0 0 22 18"><rect x="6.5" y="6.5" width="11" height="8.5" fill="#fdfdfd" stroke="#5a5a5a"/><path d="M11 3.6h7" stroke="#5a5a5a" stroke-width="2"/><path d="M17.5 3v4" stroke="#5a5a5a"/><circle cx="8" cy="5" r="3.2" fill="#5a5a5a"/><path d="M8.5 9.5h2M11.5 9.5h2M14.5 9.5h2M8.5 12.5h2M11.5 12.5h2M14.5 12.5h2" stroke="#6a6a6a" stroke-width="1.2"/></svg>
<svg class="abs" style="left:395px;top:3px" width="100" height="16" viewBox="0 0 100 16" fill="none" stroke="#555" stroke-width="1">
<rect x="2.5" y="1.5" width="13" height="12"/><path d="M2.5 5.5h13M2.5 9.5h13M6.5 1.5v12M11.5 1.5v12"/>
<rect x="42.5" y="1.5" width="13" height="12"/><rect x="45.5" y="4.5" width="7" height="6"/><path d="M47 6.5h4M47 8.5h4"/>
<path d="M82.5 1.5h13v12h-13zM86.5 1.5v7h5v-7" />
</svg>
<div class="abs" style="left:511px;top:11px;width:7px;height:1px;background:#555"></div>
<div class="abs" style="left:523px;top:11px;width:99px;height:1px;background:#666"></div>
<div class="abs" style="left:571px;top:6px;width:5px;height:12px;background:#444"></div>
<div class="abs" style="left:627px;top:11px;width:9px;height:1px;background:#555"></div><div class="abs" style="left:631px;top:7px;width:1px;height:9px;background:#555"></div>

</div>

<!-- DIALOG -->
<div id="dlg" class="abs"><div class="abs" style="left:0;top:1px;width:434px;height:274px">
<div class="abs" style="left:0;top:-1px;width:434px;height:30px;background:#eef2f9"></div>
<div class="t" style="left:8px;top:8px;font-size:12px;color:#111;letter-spacing:-0.16px;-webkit-text-stroke:.22px;">Remove Duplicates</div>
<div class="t" style="left:362.7px;top:6px;font-size:14px;color:#111;-webkit-text-stroke:.22px;">?</div>
<svg class="abs" style="left:404px;top:6px" width="16" height="16" viewBox="0 0 16 16" stroke="#111" stroke-width="1.1"><path d="M3 2.5l9.5 9.5M12.5 2.5l-9.5 9.5"/></svg>
<div class="t" style="left:6.3px;top:37px;font-size:12px;color:#111;letter-spacing:-0.15px;-webkit-text-stroke:.22px;">To delete duplicate values, select one or more columns that contain duplicates.</div>
<div class="abs" style="left:6px;top:53px;width:422px;height:42px;border:1px solid #dcdcdc;border-radius:3px"></div>
<div class="btn" style="left:18px;top:62px;width:82px;height:24px"></div>
<div class="t" style="left:44.7px;top:68px;font-size:12px;color:#111;letter-spacing:-0.26px;-webkit-text-stroke:.22px;">Select <u>A</u>ll</div>
<div class="btn" style="left:111px;top:62px;width:96px;height:24px"></div>
<div class="t" style="left:137.6px;top:68px;font-size:12px;color:#111;letter-spacing:-0.21px;-webkit-text-stroke:.22px;"><u>U</u>nselect All</div>
<svg class="abs" style="left:24px;top:66px" width="18" height="16" viewBox="0 0 18 16" fill="none">
<path d="M1.5 2.5l1.3 1.3 2-2.3M1.5 6.5l1.3 1.3 2-2.3M1.5 10.5l1.3 1.3 2-2.3M1.5 14l1.3 1.3 2-2.3" stroke="#1e8a3c" stroke-width="1.1"/>
<path d="M7 2.5h10M7 5.5h10M7 8.5h10M7 11.5h10M7 14.5h10" stroke="#5d6f8f" stroke-width=".9"/></svg>
<svg class="abs" style="left:118px;top:66px" width="18" height="16" viewBox="0 0 18 16" fill="none">
<rect x="1.5" y="1.5" width="3" height="3" stroke="#3d6cb5"/><rect x="1.5" y="6.5" width="3" height="3" stroke="#3d6cb5"/><rect x="1.5" y="11.5" width="3" height="3" stroke="#3d6cb5"/>
<path d="M7 2.5h10M7 5.5h10M7 8.5h10M7 11.5h10M7 14.5h10" stroke="#5d6f8f" stroke-width=".9"/></svg>

<div class="abs" style="left:289px;top:62px;width:13px;height:13px;background:#0067c0;border-radius:3px"></div>
<svg class="abs" style="left:289px;top:62px" width="13" height="13" viewBox="0 0 13 13" fill="none" stroke="#fff" stroke-width="1.2"><path d="M3 6.7l2.3 2.3 4.7-4.8"/></svg>
<div class="t" style="left:308.6px;top:63px;font-size:12px;color:#111;letter-spacing:-0.31px;-webkit-text-stroke:.22px;"><u>M</u>y data has headers</div>
<div class="abs" style="left:6px;top:104px;width:422px;height:127px;background:#fff;border:1px solid #8e8f96"></div>
<div class="t" style="left:11.6px;top:110px;font-size:12px;color:#111;letter-spacing:-0.3px;-webkit-text-stroke:.22px;">Columns</div>
<div class="abs" style="left:10px;top:125px;width:416px;height:18px;background:#0078d7"></div>
<div class="abs" style="left:10px;top:127px;width:13px;height:14px;background:rgba(20,40,120,.18)"></div>
<svg class="abs" style="left:10px;top:128px" width="13" height="13" viewBox="0 0 13 13" fill="none" stroke="#fff" stroke-width="1"><path d="M3 6.7l2.3 2.3 4.7-4.8"/></svg>
<div class="t" style="left:28.9px;top:129px;font-size:12px;color:#fff;letter-spacing:-0.73px;-webkit-text-stroke:.22px;">Name</div>
<div class="cb" style="left:10px;top:147px"></div>
<div class="t" style="left:28.7px;top:147px;font-size:12px;color:#111;letter-spacing:-0.45px;-webkit-text-stroke:.22px;">Cource</div>
<div class="cb" style="left:10px;top:165px"></div>
<div class="t" style="left:28.7px;top:165px;font-size:12px;color:#111;letter-spacing:-0.45px;-webkit-text-stroke:.22px;">Percentage</div>
<div class="btn" style="left:271px;top:245px;width:70px;height:21px"></div>
<div class="t" style="left:298.8px;top:250px;font-size:12px;color:#111;letter-spacing:-1px;-webkit-text-stroke:.22px;">OK</div>
<div class="btn" style="left:354px;top:245px;width:73px;height:21px"></div>
<div class="t" style="left:373.3px;top:250px;font-size:12px;color:#111;transform:scaleX(0.914);transform-origin:0 0;-webkit-text-stroke:.22px;">Cancel</div>
<div class="abs" style="left:430px;top:263px;width:2px;height:2px;background:#bdbdbd"></div>
<div class="abs" style="left:430px;top:266px;width:2px;height:2px;background:#bdbdbd"></div>
<div class="abs" style="left:427px;top:266px;width:2px;height:2px;background:#bdbdbd"></div>
<div class="abs" style="left:430px;top:269px;width:2px;height:2px;background:#bdbdbd"></div>
<div class="abs" style="left:427px;top:269px;width:2px;height:2px;background:#bdbdbd"></div>
<div class="abs" style="left:424px;top:269px;width:2px;height:2px;background:#bdbdbd"></div>
</div></div>

<!-- ANNOTATION ARROWS -->
<div class="abs" style="left:141px;top:238px;width:109px;height:28px;border:4px solid #000"></div>
<div class="abs" style="left:402px;top:359px;width:80px;height:29px;border:5px solid #000"></div>
<svg class="abs" style="left:0;top:0" width="698" height="584" viewBox="0 0 698 584" fill="#000">
<polygon points="70,247 106,247 106,243 143,251 143,255 106,261 106,258 70,258"/>
<polygon points="328,367 363,367 363,362 404,371 404,374 363,381 363,377 328,377"/>
</svg>

</div></div>
</body>
</html>
